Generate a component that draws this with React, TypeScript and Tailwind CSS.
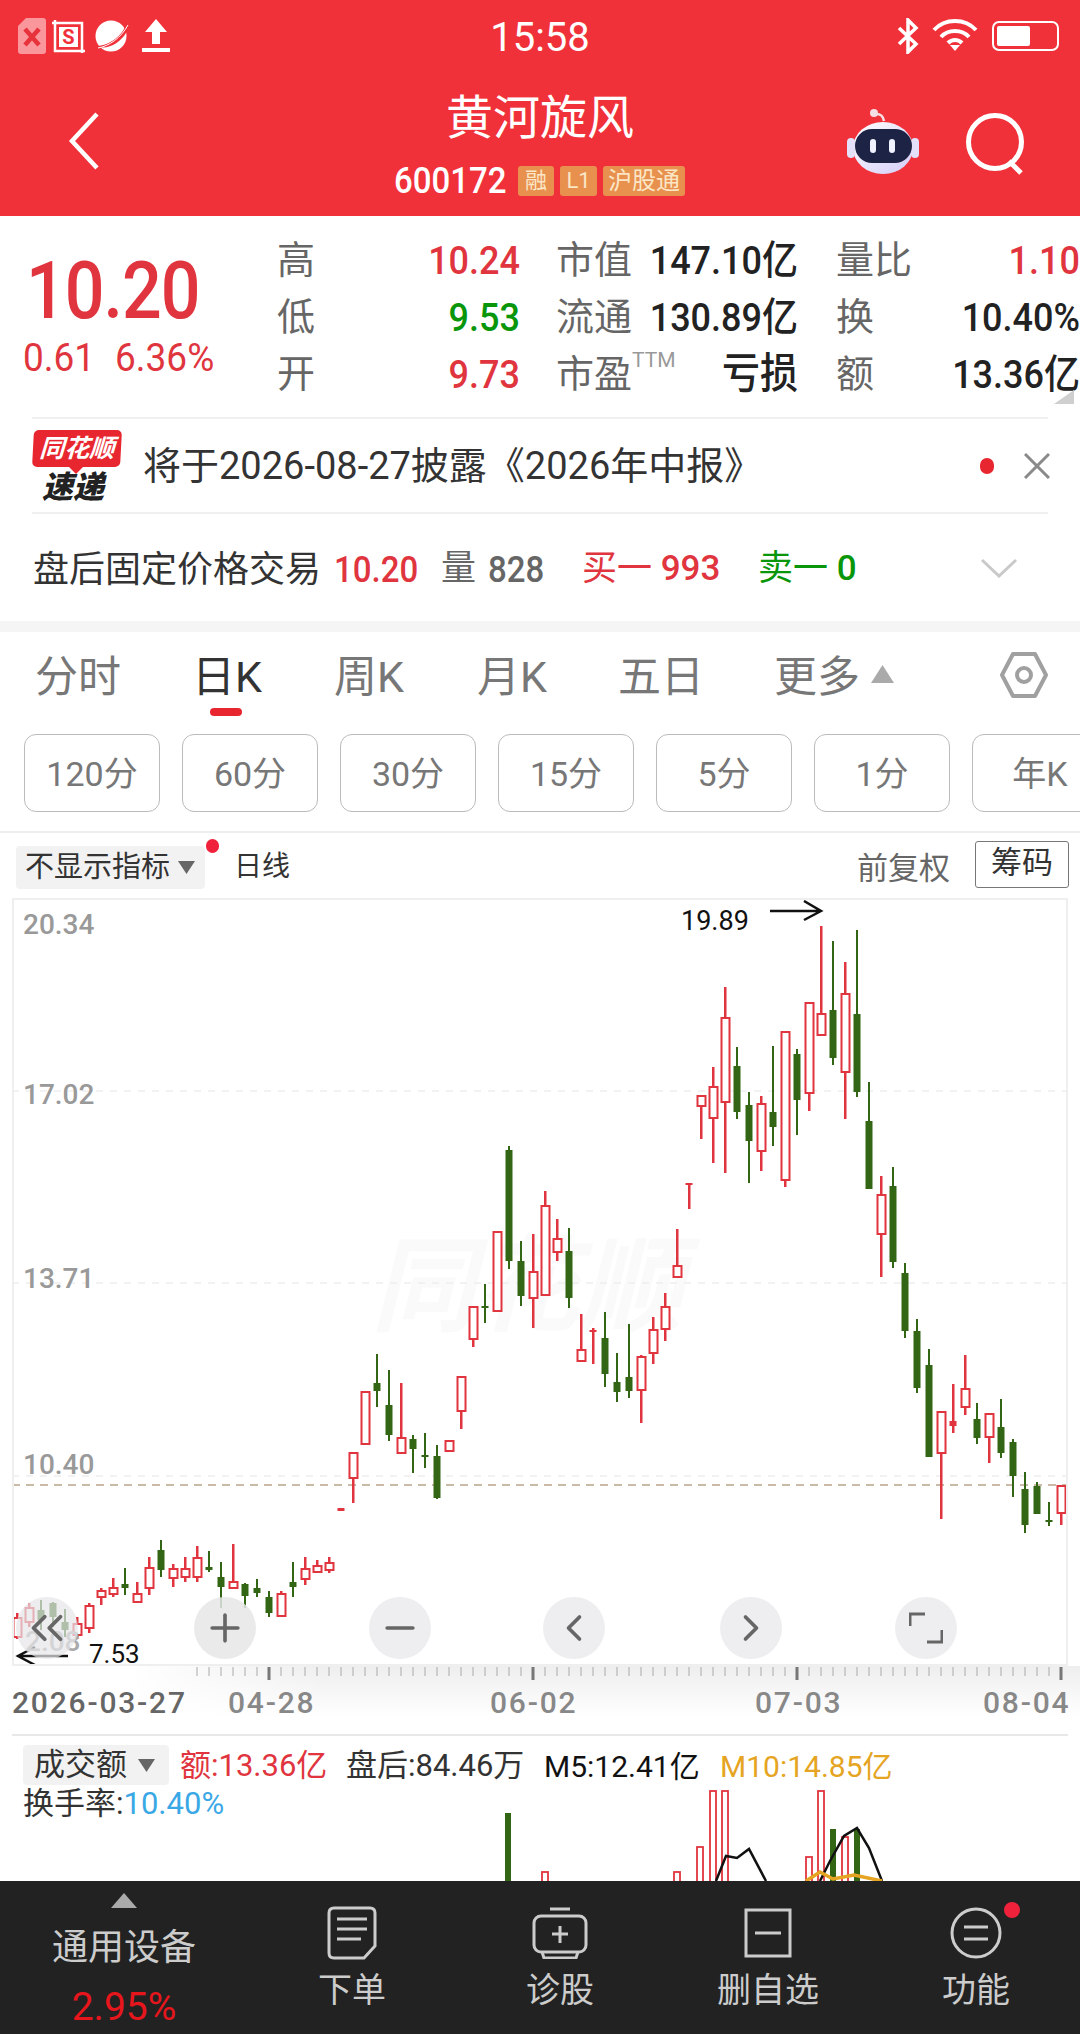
import React from "react";
import { ChevronsLeft, Plus, Minus, ChevronLeft, ChevronRight } from "lucide-react";

const R = "#e0353e";
const G = "#336614";
type C = [number, number, number, number, number];
// x index order: [high, top, bottom, low, 1=red 0=green]
const candles: C[] = [
  [1613,1617,1637,1639,1],[1603,1607,1622,1627,1],[1600,1610,1620,1630,0],[1602,1603,1617,1627,0],[1609,1622,1630,1637,0],
  [1617,1623,1635,1639,1],[1603,1605,1628,1633,1],[1588,1590,1597,1605,1],[1578,1587,1594,1597,1],[1568,1584,1588,1595,0],
  [1582,1593,1602,1603,1],[1557,1567,1588,1595,1],[1540,1550,1570,1577,0],[1564,1568,1578,1587,1],[1557,1568,1577,1582,1],
  [1546,1557,1577,1582,1],[1551,1567,1570,1572,0],[1562,1577,1587,1608,0],[1544,1581,1588,1588,1],[1583,1584,1596,1608,0],
  [1579,1588,1593,1597,0],[1591,1597,1613,1617,0],[1591,1593,1616,1617,1],[1562,1582,1587,1597,0],[1557,1568,1579,1585,1],
  [1560,1565,1572,1573,1],[1557,1562,1570,1573,1],[1508,1508,1511,1511,2],[1452,1452,1478,1503,1],[1391,1391,1444,1444,1],
  [1354,1383,1391,1407,0],[1370,1405,1435,1441,0],[1383,1437,1453,1453,1],[1435,1439,1449,1473,0],[1433,1455,1457,1468,0],
  [1445,1456,1498,1499,0],[1440,1440,1451,1451,1],[1376,1376,1411,1429,1],[1306,1306,1339,1347,1],[1284,1306,1308,1323,0],
  [1231,1231,1311,1311,1],[1146,1150,1261,1269,0],[1241,1261,1296,1306,0],[1234,1271,1298,1328,1],[1191,1205,1295,1295,1],
  [1219,1238,1252,1261,1],[1228,1251,1298,1308,0],[1314,1349,1361,1361,1],[1328,1330,1332,1364,2],[1312,1338,1374,1387,0],
  [1353,1382,1392,1402,0],[1324,1377,1391,1398,0],[1355,1356,1390,1423,1],[1317,1329,1353,1364,1],[1293,1306,1329,1341,1],
  [1229,1265,1277,1277,1],[1183,1183,1185,1209,2],[1095,1095,1106,1139,1],[1067,1086,1118,1163,1],[987,1017,1102,1173,1],
  [1047,1066,1112,1119,0],[1092,1105,1141,1183,0],[1096,1103,1151,1171,1],[1046,1112,1127,1146,0],[1031,1031,1180,1187,1],
  [1049,1054,1100,1135,0],[1002,1002,1093,1111,1],[926,1013,1035,1035,1],[941,1010,1058,1065,0],[962,993,1072,1119,1],
  [930,1014,1092,1097,0],[1082,1121,1189,1189,0],[1176,1194,1234,1277,1],[1167,1186,1262,1268,0],[1263,1273,1331,1338,0],
  [1319,1331,1388,1393,0],[1349,1365,1457,1457,0],[1411,1411,1453,1519,1],[1384,1421,1426,1433,2],[1355,1388,1407,1415,1],
  [1403,1419,1438,1444,0],[1413,1413,1437,1463,1],[1399,1427,1453,1458,0],[1439,1442,1476,1497,0],[1472,1489,1525,1533,0],
  [1482,1486,1514,1514,0],[1502,1520,1522,1526,0],[1485,1485,1513,1525,1],
];

const Tri = ({ up, w, h, color }: { up?: boolean; w: number; h: number; color: string }) => (
  <svg width={w} height={h} viewBox="0 0 10 10" preserveAspectRatio="none" className="shrink-0">
    <polygon points={up ? "5,0 10,10 0,10" : "0,0 10,0 5,10"} fill={color} />
  </svg>
);

const StatusBar = () => (
  <div className="h-[74px] flex items-center relative text-white">
    <svg width="28" height="36" viewBox="0 0 28 36" className="ml-[18px] mt-[-2px]">
      <path d="M8 0 H25 Q28 0 28 3 V33 Q28 36 25 36 H3 Q0 36 0 33 V8Z" fill="#f9979d" />
      <path d="M7 11 L21 27 M21 11 L7 27" stroke="#e8323b" strokeWidth="4.5" />
    </svg>
    <svg width="34" height="34" viewBox="0 0 34 34" className="ml-[6px] mt-[-2px]" fill="none" stroke="#fff">
      <path d="M3 1 V32 H33 M0 4 H30 V34" strokeWidth="2.5" />
      <rect x="7" y="8" width="19" height="20" fill="#fff" stroke="none" />
      <text x="16.5" y="25" fontSize="20" textAnchor="middle" fill="#f0313a" stroke="none" fontWeight="700">S</text>
    </svg>
    <svg width="34" height="36" viewBox="0 0 34 36" className="ml-[9px] mt-[-2px]">
      <circle cx="16" cy="18" r="15.5" fill="#fff" />
      <path d="M1 28 C14 28 28 18 32 4 C33.500 8 33 12 31 15 C25 25 12 33 1 28Z" fill="#f0313a" />
      <path d="M3 30 C14 28 26 20 33 7" stroke="#fff" strokeWidth="1" fill="none" />
    </svg>
    <svg width="28" height="34" viewBox="0 0 28 34" className="ml-[13px] mt-[-2px]" fill="#fff">
      <polygon points="14,0 25,13 18,13 18,25 10,25 10,13 3,13" /><rect x="0" y="29" width="28" height="4" />
    </svg>
    <div className="absolute left-0 right-0 top-[15px] text-center text-[40px] leading-[46px]">15:58</div>
    <svg width="24" height="36" viewBox="0 0 24 36" className="ml-auto mt-[-2px]" fill="none" stroke="#fff" strokeWidth="3.5">
      <path d="M3 10 L20 26 L12 34 V2 L20 10 L3 26" />
    </svg>
    <svg width="46" height="32" viewBox="0 0 46 32" className="ml-[12px] mt-[-4px]" fill="none" stroke="#fff" strokeWidth="4">
      <path d="M2 11 C13 -1 33 -1 44 11" /><path d="M9 18 C16 10 30 10 37 18" /><path d="M16 24 C20 20 26 20 30 24" />
      <polygon points="23,32 18,26 28,26" fill="#fff" stroke="none" />
    </svg>
    <div className="w-[67px] h-[30px] ml-[14px] mr-[21px] border-2 border-white rounded-[7px] p-[3px] flex mt-[-2px]">
      <div className="w-[33px] bg-white rounded-[2px]" />
    </div>
  </div>
);

const Robot = () => (
  <svg width="72" height="66" viewBox="0 0 72 66">
    <defs>
      <linearGradient id="rb" x1="0" y1="0" x2="1" y2="1"><stop offset="0" stopColor="#ffffff" /><stop offset="1" stopColor="#d3ccf8" /></linearGradient>
    </defs>
    <path d="M29 6 C33 6 36 7 37 13" stroke="#f6dfe4" strokeWidth="2.500" fill="none" />
    <circle cx="27" cy="5" r="4" fill="#f6dfe4" />
    <ellipse cx="36" cy="40" rx="30" ry="26" fill="url(#rb)" />
    <rect x="0" y="30" width="8" height="20" rx="4" fill="#e4e0fa" /><rect x="64" y="30" width="8" height="20" rx="4" fill="#e4e0fa" />
    <rect x="8" y="21" width="57" height="34" rx="17" fill="#1d2344" />
    <rect x="23" y="31" width="6" height="14" rx="3" fill="#f1f2ff" /><rect x="42" y="31" width="6" height="14" rx="3" fill="#f1f2ff" />
  </svg>
);

const Header = () => (
  <header className="h-[216px] bg-[#f0313a] text-white">
    <StatusBar />
    <div className="h-[142px] flex relative">
      <svg width="32" height="58" viewBox="0 0 32 58" className="ml-[68px] mt-[38px]" fill="none" stroke="#fff" strokeWidth="4.500"><path d="M29 2 L4 29 L29 56" /></svg>
      <div className="absolute left-0 right-0 top-[17px] text-center text-[47px] leading-[54px]">黄河旋风</div>
      <div className="absolute left-[394px] top-[90px] flex items-center">
        <span className="text-[33px] leading-[34px] font-medium w-[124px] inline-block scale-y-110">600172</span>
        <span className="w-[36px] h-[30px] bg-[#e8904e] rounded-[3px] text-[#fbe6c6] text-[22px] leading-[30px] text-center">融</span>
        <span className="w-[37px] h-[30px] ml-[6px] bg-[#e8904e] rounded-[3px] text-[#fbe6c6] text-[22px] leading-[30px] text-center">L1</span>
        <span className="w-[82px] h-[30px] ml-[6px] bg-[#e8904e] rounded-[3px] text-[#fbe6c6] text-[24px] leading-[30px] text-center">沪股通</span>
      </div>
      <div className="ml-auto flex items-start pt-[34px]">
        <Robot />
        <svg width="62" height="62" viewBox="0 0 62 62" className="ml-[46px] mr-[53px] mt-[5px]" fill="none" stroke="#fff" strokeWidth="5">
          <circle cx="30" cy="29" r="26.500" /><path d="M44 48 L56 60" />
        </svg>
      </div>
    </div>
  </header>
);

const V = ({ c, children }: { c: string; children: React.ReactNode }) => (
  <span className={`inline-block scale-y-110 font-medium whitespace-nowrap ${c}`}>{children}</span>
);
const L = ({ children }: { children: React.ReactNode }) => <span className="text-[38px] text-[#666] whitespace-nowrap">{children}</span>;

const rows = [
  { a: "高", av: "10.24", ac: "text-[36px] text-[#e0353e]", b: "市值", bv: "147.10亿", bc: "text-[36px] text-[#222]", c: "量比", cv: "1.10", cc: "text-[36px] text-[#e0353e]" },
  { a: "低", av: "9.53", ac: "text-[36px] text-[#0a960a]", b: "流通", bv: "130.89亿", bc: "text-[36px] text-[#222]", c: "换", cv: "10.40%", cc: "text-[36px] text-[#222]" },
  { a: "开", av: "9.73", ac: "text-[36px] text-[#e0353e]", b: "市盈", bv: "亏损", bc: "text-[38px] text-[#222]", c: "额", cv: "13.36亿", cc: "text-[36px] text-[#222]" },
];

const Quote = () => (
  <section className="h-[405px] bg-white relative">
    <div className="h-[201px] flex">
      <div className="w-[277px] shrink-0 pl-[23px]">
        <div className="text-[70px] leading-[76px] mt-[37px] ml-[3px] font-medium text-[#e0353e] tracking-[-1px] scale-y-[1.13] origin-center">10.20</div>
        <div className="mt-[8px] flex text-[37px] leading-[42px] text-[#e0353e] scale-y-105">
          <span className="w-[92px]">0.61</span><span>6.36%</span>
        </div>
      </div>
      <div className="pt-[16px] flex-1">
        {rows.map((r, i) => (
          <div key={i} className="h-[57px] flex items-center">
            <div className="w-[243px] flex justify-between items-center"><L>{r.a}</L><V c={r.ac}>{r.av}</V></div>
            <div className="w-[242px] ml-[36px] flex justify-between items-center">
              <span className="text-[38px] text-[#666] whitespace-nowrap">{r.b}{i === 2 && <sup className="text-[21px] text-[#999] align-[10px] leading-none">TTM</sup>}</span>
              <V c={r.bc}>{r.bv}</V>
            </div>
            <div className="w-[244px] ml-[38px] flex justify-between items-center"><L>{r.c}</L><V c={r.cc}>{r.cv}</V></div>
          </div>
        ))}
      </div>
    </div>
    <svg width="20" height="14" viewBox="0 0 20 14" className="absolute right-[6px] top-[174px]"><polygon points="20,0 20,14 0,14" fill="#cfcfcf" /></svg>
    <div className="mx-[32px] h-[97px] border-y-2 border-[#f0f0f0] flex items-center">
      <div className="w-[88px] shrink-0 ml-[1px]">
        <div className="h-[37px] bg-[#e8262f] rounded-[5px] -skew-x-3 text-white text-[25px] leading-[37px] font-bold italic text-center">同花顺</div>
        <svg width="14" height="7" viewBox="0 0 14 7" className="ml-[36px] block"><polygon points="0,0 14,0 7,7" fill="#e8262f" /></svg>
        <div className="text-[31px] leading-[27px] font-black italic text-[#222] ml-[9px]">速递</div>
      </div>
      <div className="ml-[22px] text-[38px] leading-[44px] text-[#333] whitespace-nowrap">将于2026-08-27披露《2026年中报》</div>
      <div className="ml-auto w-[14px] h-[16px] rounded-full bg-[#e8262f]" />
      <svg width="26" height="26" viewBox="0 0 26 26" className="ml-[30px] mr-[-2px]" fill="none" stroke="#8a8a8a" strokeWidth="3"><path d="M1 1 L25 25 M25 1 L1 25" /></svg>
    </div>
    <div className="h-[107px] pt-[4px] flex items-center pl-[33px] text-[35px] whitespace-nowrap">
      <span className="text-[36px] text-[#333] w-[301px]">盘后固定价格交易</span>
      <span className="w-[107px] text-[33px] text-[#e0353e] font-medium scale-y-110 origin-center">10.20</span>
      <span className="w-[47px] text-[#666]">量</span>
      <span className="w-[94px] text-[33px] text-[#666] font-medium scale-y-110 origin-center">828</span>
      <span className="w-[176px] text-[#e0353e]">买一 <span className="font-medium">993</span></span>
      <span className="w-[223px] text-[#0a960a]">卖一 <span className="font-medium">0</span></span>
      <svg width="38" height="20" viewBox="0 0 38 20" fill="none" stroke="#c9c9c9" strokeWidth="3" className="shrink-0 ml-[-1px] mb-[4px]"><path d="M2 2 L19 18 L36 2" /></svg>
    </div>
  </section>
);

const Tabs = () => (
  <>
    <div className="h-[11px] bg-[#f5f5f5]" />
    <div className="h-[88px] pt-[8px] flex bg-white text-[43px] text-[#777] relative">
      <span className="ml-[35px] w-[157px] leading-[74px]">分时</span>
      <div className="w-[142px] flex flex-col">
        <span className="text-[#333] leading-[74px]">日K</span>
        <span className="w-[32px] h-[8px] rounded-full bg-[#e8262f] ml-[18px] mt-[-6px]" />
      </div>
      <span className="w-[143px] leading-[74px]">周K</span>
      <span className="w-[141px] leading-[74px]">月K</span>
      <span className="w-[156px] leading-[74px]">五日</span>
      <span className="w-[97px] leading-[74px]">更多</span>
      <div className="mt-[25px]"><Tri up w={23} h={18} color="#aaaaaa" /></div>
      <svg width="48" height="46" viewBox="0 0 48 46" className="mt-[12px] absolute left-[1000px]" fill="none" stroke="#a0a0a0" strokeWidth="4">
        <polygon points="13,2 35,2 46,23 35,44 13,44 2,23" strokeLinejoin="round" /><circle cx="24" cy="23" r="7" />
      </svg>
    </div>
    <div className="h-[113px] pt-[14px] pl-[24px] flex gap-[22px] overflow-hidden bg-white border-b-2 border-[#eee]">
      {["120分", "60分", "30分", "15分", "5分", "1分", "年K"].map((t) => (
        <div key={t} className="w-[136px] h-[78px] shrink-0 border border-[#bbb] rounded-[12px] text-[34px] leading-[78px] text-center text-[#777]">{t}</div>
      ))}
    </div>
  </>
);

const Toolbar = () => (
  <div className="h-[65px] flex bg-white relative">
    <div className="w-[189px] h-[43px] ml-[16px] mt-[13px] bg-[#f2f2f2] rounded-[4px] flex items-center pl-[9px] relative">
      <span className="text-[29px] text-[#333] whitespace-nowrap w-[153px]">不显示指标</span>
      <Tri w={17} h={13} color="#666" />
      <span className="absolute right-[-14px] top-[-7px] w-[13px] h-[14px] rounded-full bg-[#f0213a]" />
    </div>
    <span className="ml-[29px] mt-[14px] text-[28px] leading-[40px] text-[#333]">日线</span>
    <span className="ml-auto mt-[16px] text-[31px] leading-[40px] text-[#666]">前复权</span>
    <div className="w-[94px] h-[47px] ml-[25px] mr-[11px] mt-[8px] border-[1.5px] border-[#777] rounded-[3px] text-[31px] leading-[42px] text-center text-[#333]">筹码</div>
  </div>
);

const Btn = ({ className, children }: { className: string; children: React.ReactNode }) => (
  <div className={`absolute w-[62px] h-[62px] rounded-full flex items-center justify-center text-[#666] ${className}`}>{children}</div>
);

const Chart = () => (
  <div className="ml-[12px] w-[1056px] h-[768px] border-2 border-[#efefef] relative bg-white overflow-hidden">
    <div className="absolute left-[357px] top-[333px] text-[104px] leading-[110px] font-bold italic text-[#fafafa] whitespace-nowrap">同花顺</div>
    <svg className="absolute left-[-14px] top-[-2px]" width="1080" height="768" viewBox="0 898 1080 768">
      {[1091, 1283, 1476].map((y) => (
        <line key={y} x1="12" x2="1068" y1={y} y2={y} stroke="#eeeeee" strokeWidth="1.500" strokeDasharray="7 7" />
      ))}
      <line x1="12" x2="1068" y1="1485" y2="1485" stroke="#b8a58c" strokeWidth="1.500" strokeDasharray="8 6" />
      {candles.map(([h, t, b, l, k], i) => {
        const x = 17 + 12 * i;
        if (k === 0)
          return (
            <g key={i} fill={G}>
              <rect x={x - 1} y={h} width="2" height={l - h} />
              <rect x={x - 3.5} y={t} width="7" height={b - t} />
            </g>
          );
        if (k === 2)
          return (
            <g key={i} fill={R}>
              <rect x={x - 1} y={h} width="2.500" height={l - h} />
              <rect x={x - 3.5} y={t} width="7" height={Math.max(b - t, 2)} />
            </g>
          );
        return (
          <g key={i}>
            <rect x={x - 1} y={h} width="2.500" height={l - h} fill={R} />
            <rect x={x - 3.5} y={t + 1} width="8" height={b - t - 1} fill="#fff" stroke={R} strokeWidth="2" />
          </g>
        );
      })}
      <g stroke="#111" strokeWidth="2.500" fill="none">
        <path d="M770 911 H821 M804 901 L821 911 L804 920" />
        <path d="M68 1656 H18 M35 1647 L18 1656 L35 1665" />
      </g>
    </svg>
    <span className="absolute left-[9px] top-[9px] text-[#999] text-[28px] leading-[32px] font-medium">20.34</span>
    <span className="absolute left-[9px] top-[179px] text-[#999] text-[28px] leading-[32px] font-medium">17.02</span>
    <span className="absolute left-[9px] top-[363px] text-[#999] text-[28px] leading-[32px] font-medium">13.71</span>
    <span className="absolute left-[9px] top-[549px] text-[#999] text-[28px] leading-[32px] font-medium">10.40</span>
    <span className="absolute left-[11px] top-[726px] text-[#aaa] text-[28px] leading-[32px] font-medium">2.08</span>
    <span className="absolute left-[667px] top-[5px] text-[#111] text-[27px] leading-[32px]">19.89</span>
    <span className="absolute left-[75px] top-[745px] text-[#111] text-[26px] leading-[19px]">7.53</span>
    <Btn className="left-[2px] top-[697px] bg-[#e6e6e8]/70"><ChevronsLeft size={54} strokeWidth={1.7} /></Btn>
    <Btn className="left-[180px] top-[697px] bg-[#e6e6e8]/85"><Plus size={44} strokeWidth={2} /></Btn>
    <Btn className="left-[355px] top-[697px] bg-[#eeeef0]"><Minus size={44} strokeWidth={2} /></Btn>
    <Btn className="left-[529px] top-[697px] bg-[#eeeef0]"><ChevronLeft size={44} strokeWidth={2} /></Btn>
    <Btn className="left-[706px] top-[697px] bg-[#eeeef0]"><ChevronRight size={44} strokeWidth={2} /></Btn>
    <Btn className="left-[881px] top-[697px] bg-[#eeeef0]">
      <svg width="34" height="32" viewBox="0 0 34 32" fill="none" stroke="#666" strokeWidth="3"><path d="M1 14 V2 H16 M33 18 V30 H18" /></svg>
    </Btn>
  </div>
);

const Axis = () => {
  const ticks: number[] = [];
  for (let x = 197; x <= 1061; x += 12) ticks.push(x);
  const major = [269, 533, 797, 1061];
  return (
    <div className="h-[68px] bg-[linear-gradient(to_right,#ffffff_12%,rgba(255,255,255,0)_30%),linear-gradient(to_bottom,#eeeeee,#ffffff_75%)]">
      <svg width="1080" height="16" viewBox="0 1666 1080 16" className="block">
        {ticks.map((x) => {
          const m = major.includes(x);
          return <line key={x} x1={x} x2={x} y1="1667" y2={m ? 1680 : 1676} stroke={m ? "#777" : "#aaa"} strokeWidth={m ? 3 : 1} />;
        })}
      </svg>
      <div className="flex text-[30px] leading-[40px] font-medium tracking-[1.8px] text-[#888] pt-[1px] pl-[12px] whitespace-nowrap">
        <span className="w-[216px] text-[#666]">2026-03-27</span>
        <span className="w-[262px]">04-28</span>
        <span className="w-[265px]">06-02</span>
        <span className="w-[228px]">07-03</span>
        <span>08-04</span>
      </div>
    </div>
  );
};

const volBars: [number, number, string][] = [
  [508, 1815, G], [545, 1873, R], [677, 1873, R], [700, 1848, R], [713, 1792, R], [725, 1792, R],
  [809, 1858, R], [821, 1792, R], [833, 1831, G], [845, 1838, R], [857, 1831, G],
];

const Volume = () => (
  <div className="h-[147px] ml-[12px] w-[1056px] border-t-2 border-[#e8e8e8] relative bg-white overflow-hidden">
    <svg className="absolute left-[-12px] top-[-2px]" width="1080" height="147" viewBox="0 1736 1080 147">
      {volBars.map(([x, y, c]) =>
        c === G ? (
          <rect key={x} x={x - 3} y={y} width="6" height={1883 - y} fill={G} />
        ) : (
          <rect key={x} x={x - 3} y={y + 1} width="6" height={1890 - y} fill="#fff" stroke={R} strokeWidth="1.800" />
        )
      )}
      <g fill="none" strokeWidth="2.500">
        <polyline stroke="#111" points="716,1883 726,1858 737,1860 749,1851 766,1883" />
        <polyline stroke="#111" points="820,1883 830,1863 844,1838 857,1830 869,1850 882,1883" />
        <polyline stroke="#e5a422" strokeWidth="3.500" points="806,1883 820,1874 833,1881 854,1877 882,1883" />
      </g>
    </svg>
    <div className="relative flex items-center h-[40px] mt-[9px] text-[31px] whitespace-nowrap">
      <div className="w-[146px] h-[40px] ml-[11px] bg-[#f2f2f2] rounded-[4px] flex items-center pl-[11px] text-[31px] text-[#333]">
        <span className="w-[104px]">成交额</span><Tri w={17} h={13} color="#666" />
      </div>
      <span className="ml-[11px] mt-[3px] w-[166px] text-[#e0353e]">额:13.36亿</span>
      <span className="w-[198px] mt-[3px] text-[#333]">盘后:84.46万</span>
      <span className="w-[176px] mt-[3px] text-[30px] text-[#111]">M5:12.41亿</span>
      <span className="mt-[3px] text-[30px] text-[#e5a422]">M10:14.85亿</span>
    </div>
    <div className="relative ml-[11px] text-[31px] leading-[36px] mt-[1px] text-[#333] whitespace-nowrap">
      换手率:<span className="text-[#3ba8e6]">10.40%</span>
    </div>
  </div>
);

const Item = ({ label, icon }: { label: string; icon: React.ReactNode }) => (
  <div className="w-[208px] pt-[25px] flex flex-col items-center relative">
    <div className="h-[54px] flex items-center">{icon}</div>
    <span className="mt-[10px] text-[34px] leading-[40px] text-[#ccc]">{label}</span>
  </div>
);

const BottomBar = () => (
  <footer className="h-[153px] bg-[#222222] flex">
    <div className="w-[248px] pt-[12px] flex flex-col items-center">
      <Tri up w={26} h={15} color="#aaaaaa" />
      <span className="mt-[19px] text-[36px] leading-[42px] text-[#ccc]">通用设备</span>
      <span className="mt-[17px] text-[39px] leading-[42px] text-[#e6161c]">2.95%</span>
    </div>
    <Item label="下单" icon={
      <svg width="50" height="54" viewBox="0 0 50 54" fill="none" stroke="#ccc" strokeWidth="3"><path d="M7 2 H43 Q48 2 48 7 V40 L37 52 H7 Q2 52 2 47 V7 Q2 2 7 2Z" /><path d="M10 13 H40 M10 23 H40 M10 33 H34" /></svg>
    } />
    <Item label="诊股" icon={
      <svg width="56" height="52" viewBox="0 0 56 52" fill="none" stroke="#ccc" strokeWidth="3"><path d="M18 2 H38" /><rect x="2" y="9" width="52" height="36" rx="7" /><path d="M28 19 V36 M20 27 H36 M10 45 L12 51 H44 L46 45" /></svg>
    } />
    <Item label="删自选" icon={
      <svg width="48" height="50" viewBox="0 0 48 50" fill="none" stroke="#ccc" strokeWidth="3"><rect x="2" y="2" width="44" height="46" /><path d="M11 25 H37" /></svg>
    } />
    <Item label="功能" icon={
      <>
        <svg width="52" height="52" viewBox="0 0 52 52" fill="none" stroke="#ccc" strokeWidth="3"><circle cx="26" cy="26" r="24" /><path d="M14 20 H38 M14 32 H38" /></svg>
        <span className="absolute left-[132px] top-[21px] w-[16px] h-[16px] rounded-full bg-[#f0213a]" />
      </>
    } />
  </footer>
);

export default function App() {
  return (
    <div className="w-[1080px] h-[2034px] overflow-hidden bg-white [font-family:Roboto,'Noto_Sans_CJK_SC',sans-serif]">
      <Header />
      <Quote />
      <Tabs />
      <Toolbar />
      <Chart />
      <Axis />
      <Volume />
      <BottomBar />
    </div>
  );
}
